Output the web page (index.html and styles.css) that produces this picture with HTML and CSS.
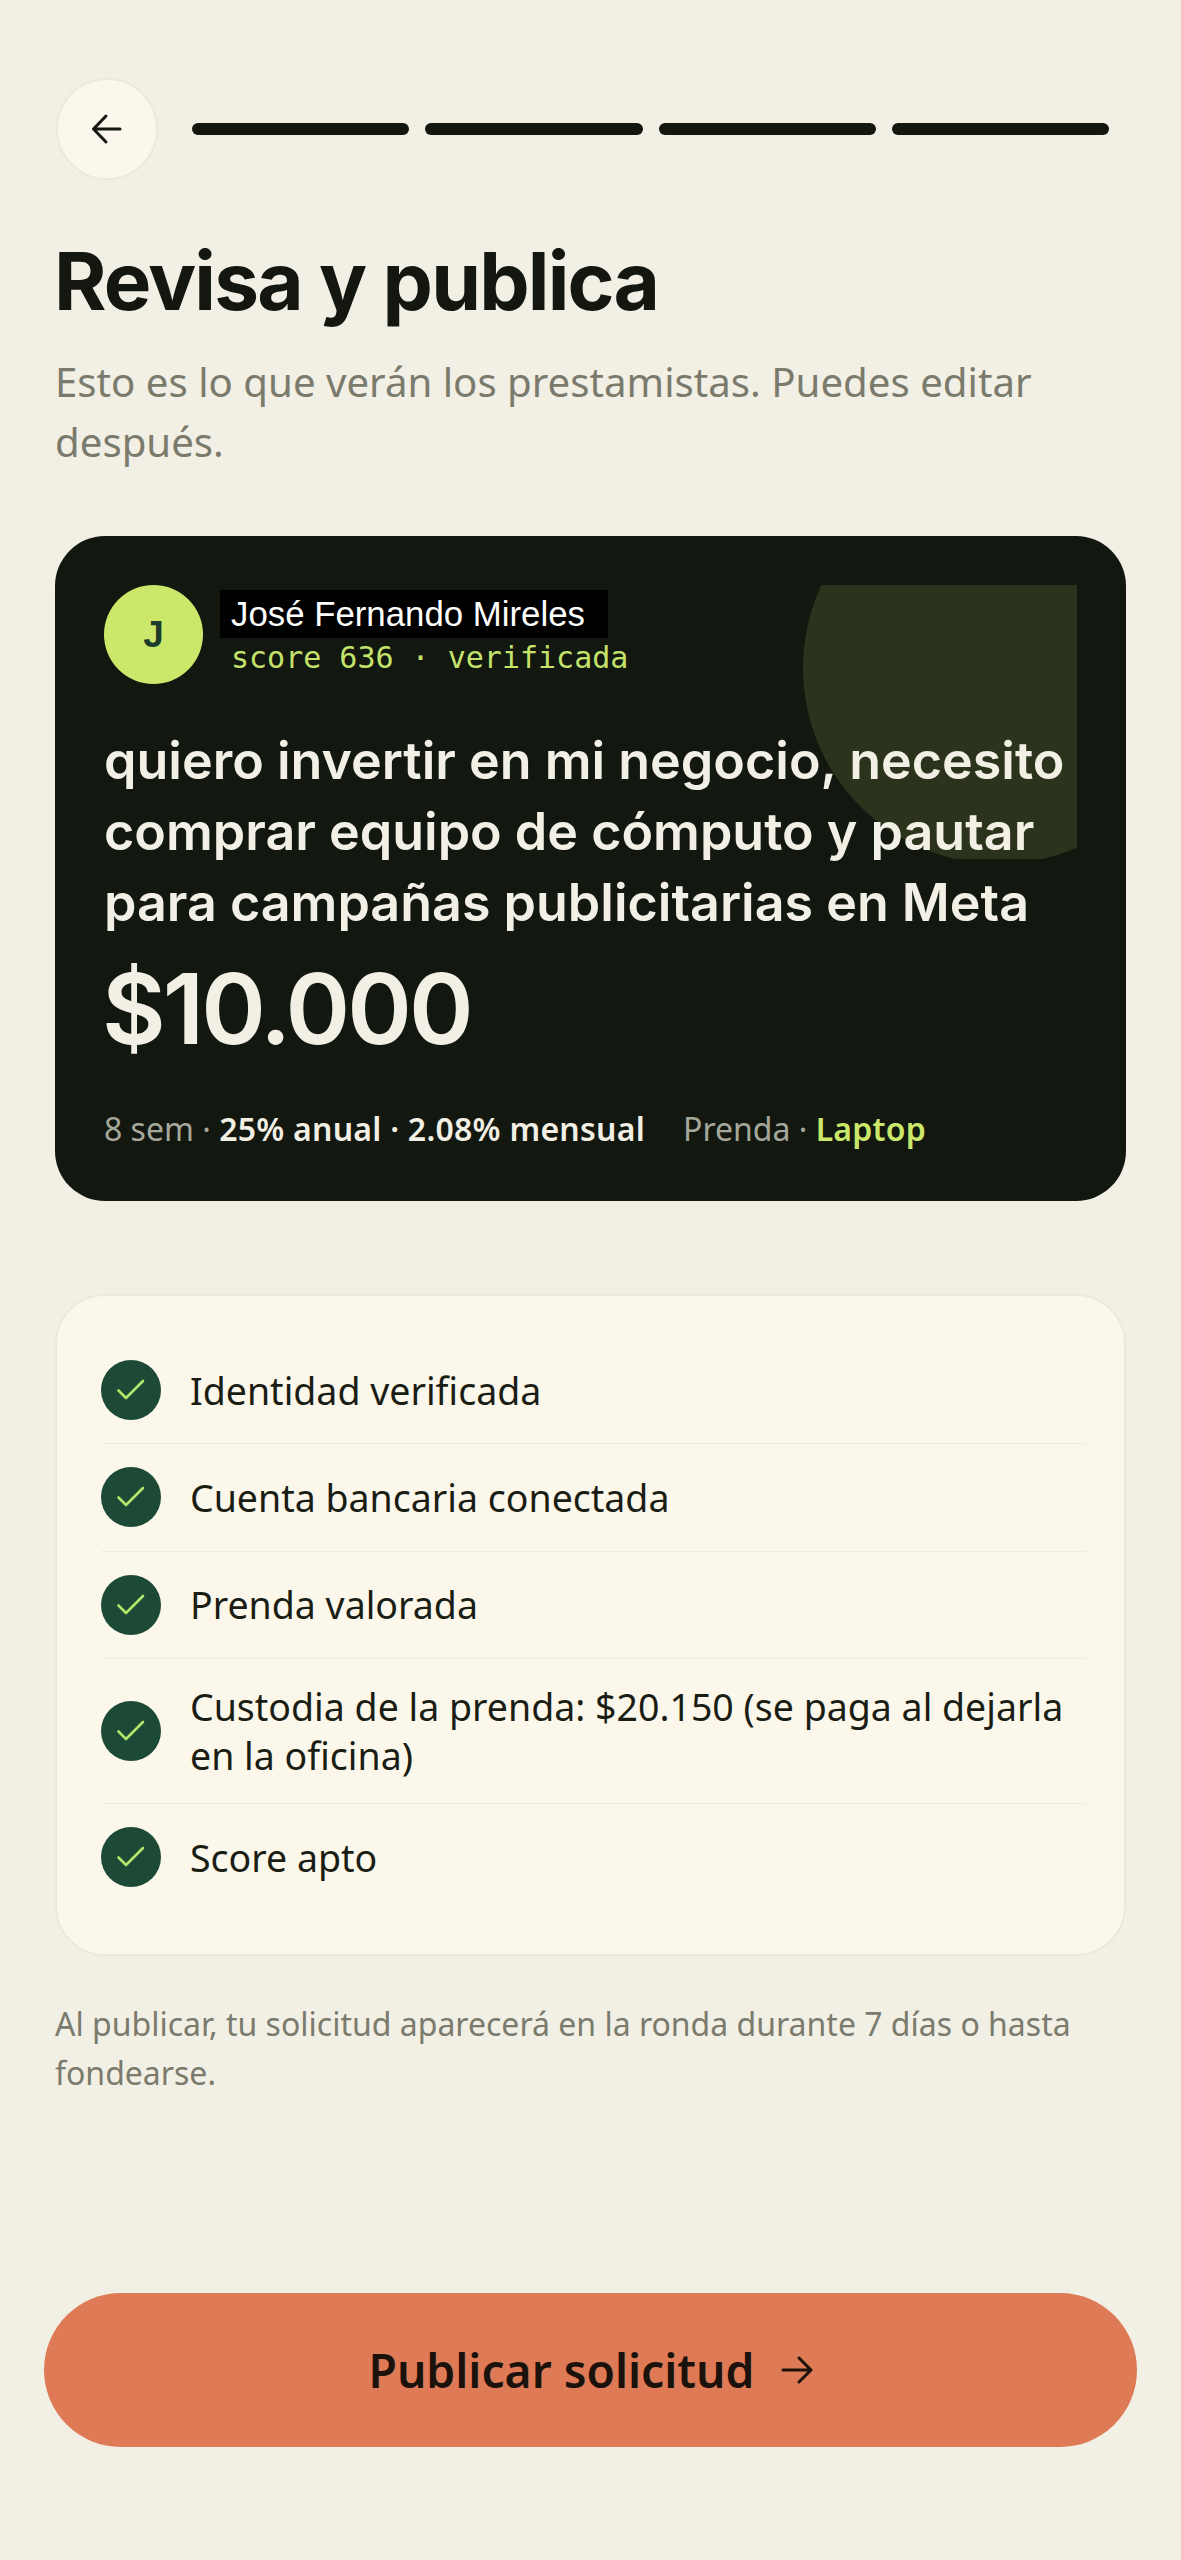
FILE: index.html
```html
<!DOCTYPE html>
<html lang="es">
<head>
<meta charset="utf-8">
<title>Revisa y publica</title>
<link rel="stylesheet" href="styles.css">
</head>
<body>
<main class="screen">
  <header class="top">
    <button class="back" aria-label="Volver">
      <svg width="36" height="36" viewBox="0 0 36 36" fill="none" stroke="#14170f" stroke-width="3" stroke-linecap="round" stroke-linejoin="round"><path d="M31 18H5M17 5 4.500 18 17 31"/></svg>
    </button>
    <div class="steps"><span></span><span></span><span></span><span></span></div>
  </header>
  <h1 class="title">Revisa y publica</h1>
  <p class="sub">Esto es lo que verán los prestamistas. Puedes editar después.</p>

  <section class="card">
    <div class="deco"><div class="deco-circle"></div></div>
    <div class="person">
      <div class="avatar">J</div>
      <div class="who">
        <div class="name">José Fernando Mireles</div>
        <div class="score">score 636 · verificada</div>
      </div>
    </div>
    <h2 class="purpose">quiero invertir en mi negocio, necesito comprar equipo de cómputo y pautar para campañas publicitarias en Meta</h2>
    <div class="amount">$10.000</div>
    <div class="meta">
      <span>8 sem · <b>25% anual · 2.08% mensual</b></span>
      <span>Prenda · <b class="lime">Laptop</b></span>
    </div>
  </section>

  <ul class="checks">
    <li><span class="tick"><svg width="30" height="26" viewBox="0 0 30 26" fill="none" stroke="#b4e66c" stroke-width="2.600" stroke-linecap="round" stroke-linejoin="round"><path d="M2.500 13.500 10 21 27 4"/></svg></span><span>Identidad verificada</span></li>
    <li><span class="tick"><svg width="30" height="26" viewBox="0 0 30 26" fill="none" stroke="#b4e66c" stroke-width="2.600" stroke-linecap="round" stroke-linejoin="round"><path d="M2.500 13.500 10 21 27 4"/></svg></span><span>Cuenta bancaria conectada</span></li>
    <li><span class="tick"><svg width="30" height="26" viewBox="0 0 30 26" fill="none" stroke="#b4e66c" stroke-width="2.600" stroke-linecap="round" stroke-linejoin="round"><path d="M2.500 13.500 10 21 27 4"/></svg></span><span>Prenda valorada</span></li>
    <li><span class="tick"><svg width="30" height="26" viewBox="0 0 30 26" fill="none" stroke="#b4e66c" stroke-width="2.600" stroke-linecap="round" stroke-linejoin="round"><path d="M2.500 13.500 10 21 27 4"/></svg></span><span>Custodia de la prenda: $20.150 (se paga al dejarla en la oficina)</span></li>
    <li><span class="tick"><svg width="30" height="26" viewBox="0 0 30 26" fill="none" stroke="#b4e66c" stroke-width="2.600" stroke-linecap="round" stroke-linejoin="round"><path d="M2.500 13.500 10 21 27 4"/></svg></span><span>Score apto</span></li>
  </ul>

  <p class="note">Al publicar, tu solicitud aparecerá en la ronda durante 7 días o hasta fondearse.</p>

  <button class="cta">
    <span>Publicar solicitud</span>
    <svg width="32" height="32" viewBox="0 0 32 32" fill="none" stroke="#1b120b" stroke-width="3" stroke-linecap="round" stroke-linejoin="round"><path d="M2 16h27M18 4l12 12-12 12"/></svg>
  </button>
</main>
</body>
</html>
```
FILE: styles.css
```css
* { box-sizing: border-box; }
html, body { margin: 0; padding: 0; }
body {
  background: #f2efe4;
  color: #14170f;
  font-family: "Noto Sans", "Inter", sans-serif;
}
.screen {
  height: 2560px;
  padding: 78px 56px 113px;
  display: flex;
  flex-direction: column;
}
.top {
  display: flex;
  align-items: center;
  gap: 34px;
  padding-right: 16px;
}
.back {
  width: 102px;
  height: 102px;
  flex: none;
  border-radius: 50%;
  border: 2px solid #ece8dc;
  background: #fbf7ec;
  display: flex;
  align-items: center;
  justify-content: center;
  padding: 0;
}
.steps { flex: 1; display: flex; gap: 16px; }
.steps span { flex: 1; height: 12px; border-radius: 6px; background: #14170f; }
.title {
  margin: 53px 0 0 -2px;
  font-family: "Inter", sans-serif;
  font-size: 80px;
  line-height: 96px;
  font-weight: 700;
  letter-spacing: -1.800px;
}
.sub {
  margin: 23px 0 0 -1px;
  font-size: 40.200px;
  line-height: 60px;
  color: #7b7b6d;
}
.card {
  position: relative;
  margin: 64px 0 0 -1px;
  width: 1071px;
  height: 665px;
  padding: 49px;
  border-radius: 50px;
  background: #12170f;
  color: #f2efe4;
}
.deco {
  position: absolute;
  top: 49px;
  right: 49px;
  width: 274px;
  height: 274px;
  overflow: hidden;
}
.deco-circle {
  width: 392px;
  height: 392px;
  margin-top: -113px;
  border-radius: 50%;
  background: #2b331c;
}
.person { position: relative; display: flex; align-items: center; gap: 17px; }
.avatar {
  width: 99px;
  height: 99px;
  flex: none;
  border-radius: 50%;
  background: #cbe86a;
  color: #1c3b2b;
  font-family: "Liberation Sans", sans-serif;
  font-weight: 700;
  font-size: 37px;
  display: flex;
  align-items: center;
  justify-content: center;
}
.who { display: flex; flex-direction: column; align-items: flex-start; padding-bottom: 3px; }
.name {
  background: #000;
  color: #fff;
  font-family: "Liberation Sans", sans-serif;
  font-size: 34.800px;
  line-height: 48px;
  padding: 0 23px 0 11px;
}
.score {
  margin-left: 11px;
  margin-top: 1px;
  font-family: "DejaVu Sans Mono", monospace;
  font-size: 30px;
  line-height: 38px;
  color: #c5e26a;
}
.purpose {
  position: relative;
  margin: 41px 0 0;
  font-family: "Inter", sans-serif;
  font-size: 52px;
  line-height: 71px;
  font-weight: 600;
  letter-spacing: 0;
}
.amount {
  position: relative;
  margin: 13px 0 0 -2px;
  font-family: "Inter", sans-serif;
  font-size: 98px;
  line-height: 116px;
  font-weight: 600;
  letter-spacing: -3px;
}
.meta {
  position: relative;
  margin-top: 40px;
  display: flex;
  gap: 38px;
  font-size: 32px;
  line-height: 44px;
  color: #a5a89a;
}
.meta b { color: #f2efe4; font-weight: 600; letter-spacing: 0.250px; }
.meta b.lime { color: #cbe86a; }
.checks {
  list-style: none;
  margin: 93px 0 0 -1px;
  width: 1071px;
  padding: 41px 38px 44px 44px;
  border: 2px solid #ece8dc;
  border-radius: 50px;
  background: #fbf7ea;
}
.checks li {
  display: flex;
  align-items: center;
  gap: 29px;
  padding: 23px 0 23.300px;
  font-size: 37.500px;
  line-height: 49px;
  color: #1a1d14;
  border-bottom: 1px solid #efebdd;
}
.checks li:last-child { border-bottom: 0; }
.tick {
  width: 60px;
  height: 60px;
  flex: none;
  border-radius: 50%;
  background: #1c4a36;
  display: flex;
  align-items: center;
  justify-content: center;
}
.note {
  margin: 43px 0 0 -1px;
  font-size: 32px;
  line-height: 49px;
  color: #7b7b6d;
}
.cta {
  margin: auto -12px 0;
  height: 154px;
  flex: none;
  border: 0;
  border-radius: 77px;
  background: #df7a56;
  color: #1b120b;
  font-family: "Noto Sans", sans-serif;
  font-size: 46.200px;
  font-weight: 600;
  display: flex;
  align-items: center;
  justify-content: center;
  gap: 26px;
  padding: 0;
}
```
